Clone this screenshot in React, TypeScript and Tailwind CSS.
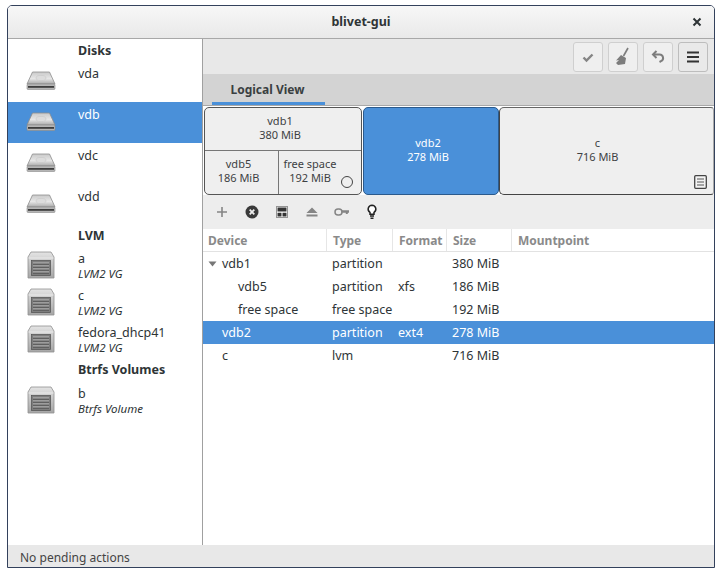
import { ReactNode } from "react";

const FONT = "font-['Noto_Sans','Open_Sans',sans-serif]";

function DiskIcon() {
  return (
    <svg width="30" height="20" viewBox="0 0 30 20">
      <defs>
        <linearGradient id="diskTop" x1="0" y1="0" x2="0" y2="1">
          <stop offset="0" stopColor="#c9c9c9" />
          <stop offset="0.55" stopColor="#e6e6e6" />
          <stop offset="1" stopColor="#a9a9a9" />
        </linearGradient>
      </defs>
      <path d="M6.5 1h17L29 13H1z" fill="url(#diskTop)" stroke="#8d8d8d" strokeWidth="0.8" />
      <ellipse cx="15" cy="7" rx="5" ry="2.6" fill="#dcdcdc" stroke="#c2c2c2" strokeWidth="0.5" />
      <rect x="1" y="13" width="28" height="5.5" rx="1" fill="#b5b5b5" stroke="#8a8a8a" strokeWidth="0.6" />
      <rect x="2" y="15" width="26" height="1.8" fill="#3d3d3d" />
    </svg>
  );
}

function VgIcon() {
  return (
    <svg width="28" height="28" viewBox="0 0 28 28">
      <defs>
        <linearGradient id="vgBody" x1="0" y1="0" x2="0" y2="1">
          <stop offset="0" stopColor="#e4e4e4" />
          <stop offset="0.3" stopColor="#cfcfcf" />
          <stop offset="1" stopColor="#a6a6a6" />
        </linearGradient>
      </defs>
      <path d="M4 1h20l3 5v21H1V6z" fill="url(#vgBody)" stroke="#8f8f8f" strokeWidth="0.8" />
      <path d="M1.5 7h25" stroke="#f2f2f2" strokeWidth="0.8" />
      <rect x="4.5" y="9.5" width="19" height="15" fill="#7d7d7d" stroke="#4f4f4f" strokeWidth="0.7" />
      <path d="M6 12h16M6 15h16M6 18h16M6 21h16" stroke="#c4c4c4" strokeWidth="0.9" />
      <path d="M6 13.2h16M6 16.2h16M6 19.2h16M6 22.2h16" stroke="#4a4a4a" strokeWidth="0.8" />
    </svg>
  );
}

function SideHeader({ label, height }: { label: string; height: string }) {
  return <div className={`${height} pl-[70px] text-[12.5px] font-bold text-[#2e3436] flex items-center`}>{label}</div>;
}

function DiskRow({ name, selected }: { name: string; selected?: boolean }) {
  return (
    <div className={`flex h-[41px] ${selected ? "bg-[#4a90d9] text-white" : "text-[#2e3436]"}`}>
      <div className="w-[70px] pl-[18px] pt-[10px]">
        <DiskIcon />
      </div>
      <div className="pt-[4px] text-[12.5px] leading-[18px]">{name}</div>
    </div>
  );
}

function VgRow({ name, kind }: { name: string; kind: string }) {
  return (
    <div className="flex h-[37px] text-[#2e3436]">
      <div className="w-[70px] pl-[19px] pt-[1px]">
        <VgIcon />
      </div>
      <div className="pt-[1px]">
        <div className="text-[12.5px] leading-[16px]">{name}</div>
        <div className="text-[11.5px] leading-[14px] italic">{kind}</div>
      </div>
    </div>
  );
}

function ToolButton({ children, raised }: { children: ReactNode; raised?: boolean }) {
  return (
    <div
      className={`flex h-[30px] w-[30px] items-center justify-center rounded-[3px] border ${
        raised ? "border-[#bdbdbd] bg-[#e9e9e9]" : "border-[#cfcfcf] bg-[#efefef]"
      }`}
    >
      {children}
    </div>
  );
}

function Block({ title, size, className }: { title: string; size: string; className: string }) {
  return (
    <div className={`flex flex-col items-center justify-center text-[11px] leading-[14px] ${className}`}>
      <span>{title}</span>
      <span>{size}</span>
    </div>
  );
}

function SmallIcon({ children }: { children: ReactNode }) {
  return (
    <div className="flex w-[30px] justify-center">
      <svg width="16" height="16" viewBox="0 0 16 16">
        {children}
      </svg>
    </div>
  );
}

const COLS = "grid grid-cols-[124px_66px_54px_65px_1fr]";

const rows = [
  { device: "vdb1", type: "partition", format: "", size: "380 MiB", indent: "pl-[19px]", arrow: true },
  { device: "vdb5", type: "partition", format: "xfs", size: "186 MiB", indent: "pl-[35px]" },
  { device: "free space", type: "free space", format: "", size: "192 MiB", indent: "pl-[35px]" },
  { device: "vdb2", type: "partition", format: "ext4", size: "278 MiB", indent: "pl-[19px]", selected: true },
  { device: "c", type: "lvm", format: "", size: "716 MiB", indent: "pl-[19px]" },
];

export default function App() {
  return (
    <div className={`h-[581px] w-[720px] overflow-hidden bg-white pl-[7px] pt-[5px] ${FONT}`}>
      <div className="flex h-[563px] w-[708px] flex-col overflow-hidden rounded-t-[5px] border border-[#33415c] bg-white">
        <header className="relative flex h-[33px] shrink-0 items-center justify-center border-b border-[#a8a8a8] bg-gradient-to-b from-[#f7f7f7] to-[#e9e9e9]">
          <span className="text-[12.5px] font-bold text-[#2e3436]">blivet-gui</span>
          <svg className="absolute right-[12px] top-[11px]" width="10" height="10" viewBox="0 0 10 10">
            <path d="M1.5 1.5l7 7M8.5 1.5l-7 7" stroke="#2e3436" strokeWidth="2" />
          </svg>
        </header>

        <div className="flex min-h-0 flex-1">
          <aside className="w-[195px] shrink-0 border-r border-[#a0a0a0] bg-white">
            <SideHeader label="Disks" height="h-[22px] pt-[2px]" />
            <DiskRow name="vda" />
            <DiskRow name="vdb" selected />
            <DiskRow name="vdc" />
            <DiskRow name="vdd" />
            <SideHeader label="LVM" height="h-[25px] pb-[2px]" />
            <VgRow name="a" kind="LVM2 VG" />
            <VgRow name="c" kind="LVM2 VG" />
            <VgRow name="fedora_dhcp41" kind="LVM2 VG" />
            <SideHeader label="Btrfs Volumes" height="h-[24px] pb-[6px]" />
            <VgRow name="b" kind="Btrfs Volume" />
          </aside>

          <main className="flex min-w-0 flex-1 flex-col">
            <div className="flex h-[35px] shrink-0 items-center justify-end gap-[5px] bg-[#e8e8e8] pr-[6px]">
              <ToolButton>
                <svg width="12" height="12" viewBox="0 0 12 12">
                  <path d="M1.5 6.5l3 3 6-6" fill="none" stroke="#858585" strokeWidth="2.4" />
                </svg>
              </ToolButton>
              <ToolButton>
                <svg width="18" height="20" viewBox="0 0 18 20">
                  <path d="M14 1L9.5 9" stroke="#7d7d7d" strokeWidth="1.6" />
                  <path d="M7 8l5 3-1 6-7 1-2-2 3-3-3 .5z" fill="#7d7d7d" />
                </svg>
              </ToolButton>
              <ToolButton>
                <svg width="14" height="13" viewBox="0 0 14 13">
                  <path d="M5.5 1L2 4.5 5.5 8" fill="none" stroke="#7d7d7d" strokeWidth="2" />
                  <path d="M2.5 4.5h6a3.5 3.5 0 0 1 1.5 6.7L8.5 12" fill="none" stroke="#7d7d7d" strokeWidth="2" />
                </svg>
              </ToolButton>
              <ToolButton raised>
                <svg width="14" height="12" viewBox="0 0 14 12">
                  <path d="M1 1.5h12M1 6h12M1 10.5h12" stroke="#333" strokeWidth="2" />
                </svg>
              </ToolButton>
            </div>

            <div className="flex h-[32px] shrink-0 border-b border-[#a8a8a8] bg-[#d3d3d3] pl-[9px]">
              <div className="flex h-[31px] w-[113px] items-center justify-center border-b-[3px] border-[#4a90d9] pr-[2px] pt-[4px] text-[12px] font-bold text-[#3a3f41]">
                Logical View
              </div>
            </div>

            <div className="flex h-[89px] shrink-0 gap-[1px] bg-white pl-[1px] pt-[1px] text-[#3d4143]">
              <div className="flex w-[158px] flex-col overflow-hidden rounded-[5px] border border-[#555] bg-[#efefef]">
                <Block title="vdb1" size="380 MiB" className="h-[43px] border-b border-[#777] pb-[2px] pr-[6px]" />
                <div className="flex flex-1">
                  <Block title="vdb5" size="186 MiB" className="w-[74px] border-r border-[#777] pb-[4px] pr-[6px]" />
                  <div className="relative flex-1">
                    <Block title="free space" size="192 MiB" className="h-full pb-[4px] pr-[20px]" />
                    <span className="absolute bottom-[6px] right-[8px] h-[12px] w-[12px] rounded-full border border-[#444]" />
                  </div>
                </div>
              </div>
              <Block
                title="vdb2"
                size="278 MiB"
                className="w-[136px] rounded-[5px] border border-[#2b5a8c] bg-[#4a90d9] pb-[2px] pr-[6px] text-white"
              />
              <div className="relative -ml-[1px] flex-1 rounded-l-[5px] rounded-r-[3px] border border-[#444] border-r-[#aaa] border-r-dashed border-t-[#666] bg-[#efefef]">
                <Block title="c" size="716 MiB" className="h-full pb-[2px] pr-[18px]" />
                <svg className="absolute bottom-[5px] right-[6px]" width="13" height="14" viewBox="0 0 13 14">
                  <rect x="0.7" y="0.7" width="11.6" height="12.6" rx="1" fill="#f3f3f3" stroke="#444" strokeWidth="1.3" />
                  <path d="M3 4h7M3 7h7M3 10h7" stroke="#555" strokeWidth="1" />
                </svg>
              </div>
            </div>

            <div className="flex h-[34px] shrink-0 items-center bg-[#ededed] pl-[4px]">
              <SmallIcon>
                <path d="M8 3v10M3 8h10" stroke="#858585" strokeWidth="1.6" />
              </SmallIcon>
              <SmallIcon>
                <circle cx="8" cy="8" r="6.5" fill="#3a3a3a" />
                <path d="M5.7 5.7l4.6 4.6M10.3 5.7l-4.6 4.6" stroke="#eee" strokeWidth="1.8" />
              </SmallIcon>
              <SmallIcon>
                <rect x="2.5" y="2.5" width="11" height="11" fill="#fff" stroke="#333" strokeWidth="1" strokeDasharray="1 1" />
                <path d="M3.5 3.5h9v4h-9zM3.5 8.8h4v3.7h-4zM8.5 8.8h4v3.7h-4z" fill="#333" />
              </SmallIcon>
              <SmallIcon>
                <path d="M8 3.5l5.5 5.5h-11z" fill="#858585" />
                <rect x="2.5" y="10.5" width="11" height="2" fill="#858585" />
              </SmallIcon>
              <SmallIcon>
                <rect x="1" y="5" width="7" height="6" rx="3" fill="none" stroke="#858585" strokeWidth="1.5" />
                <path d="M7.5 6.2h7.5v2.6h-1.2v1.2h-2V8.8H7.5z" fill="#858585" />
              </SmallIcon>
              <SmallIcon>
                <path
                  d="M8 1.2a3.9 3.9 0 0 0-2 7.2v1.8h4V8.4a3.9 3.9 0 0 0-2-7.2z"
                  fill="#fff"
                  stroke="#222"
                  strokeWidth="1.5"
                />
                <path d="M6 12h4M6.5 14.2h3" stroke="#222" strokeWidth="1.4" />
              </SmallIcon>
            </div>

            <div className={`${COLS} h-[23px] shrink-0 items-stretch border-b border-[#e2e2e2] text-[12px] font-bold text-[#8a8a8a]`}>
              {["Device", "Type", "Format", "Size", "Mountpoint"].map((label) => (
                <div key={label} className="flex items-center border-r border-[#e6e6e6] pl-[6px] pt-[1px] last:border-r-0 first:pl-[5px]">
                  {label}
                </div>
              ))}
            </div>

            <div className="flex-1 bg-white text-[12.5px] text-[#2e3436]">
              {rows.map((row) => (
                <div key={row.device} className={`${COLS} h-[23px] items-center pt-[2px] ${row.selected ? "bg-[#4a90d9] text-white" : ""}`}>
                  <div className={`relative ${row.indent}`}>
                    {row.arrow ? (
                      <svg className="absolute left-[5px] top-[6px]" width="9" height="6" viewBox="0 0 9 6">
                        <path d="M0.5 0.5h8L4.5 5.5z" fill="#777" />
                      </svg>
                    ) : null}
                    {row.device}
                  </div>
                  <div className="pl-[5px]">{row.type}</div>
                  <div className="pl-[5px]">{row.format}</div>
                  <div className="pl-[5px]">{row.size}</div>
                  <div />
                </div>
              ))}
            </div>
          </main>
        </div>

        <footer className="flex h-[22px] shrink-0 items-center bg-[#e8e8e8] pl-[12px] pt-[3px] text-[12px] text-[#444]">
          No pending actions
        </footer>
      </div>
    </div>
  );
}
